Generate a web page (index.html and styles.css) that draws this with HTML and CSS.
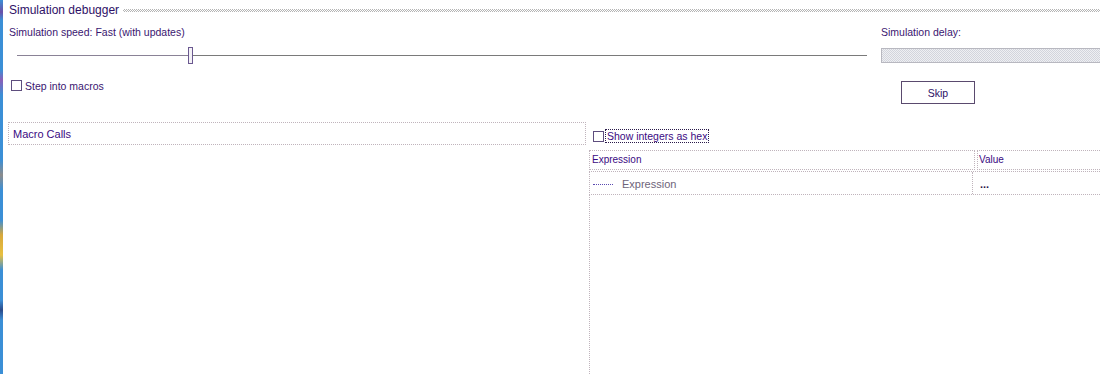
FILE: index.html
```html
<!DOCTYPE html>
<html>
<head>
<meta charset="utf-8">
<link rel="stylesheet" href="styles.css">
</head>
<body>
<div class="app">
  <div class="edge"></div>
  <div class="main">
    <div class="title-row">
      <span class="title">Simulation debugger</span>
      <span class="title-rule"></span>
    </div>
    <div class="top">
      <div class="speed">
        <div class="label">Simulation speed: Fast (with updates)</div>
        <div class="slider">
          <span class="track-left"></span>
          <span class="thumb"></span>
          <span class="track-right"></span>
        </div>
      </div>
      <div class="delay">
        <div class="label">Simulation delay:</div>
        <div class="delay-box"></div>
      </div>
    </div>
    <div class="row2">
      <div class="step">
        <span class="check"></span>
        <span class="label">Step into macros</span>
      </div>
      <div class="skip-wrap">
        <button class="skip">Skip</button>
      </div>
    </div>
    <div class="bottom">
      <div class="macro">Macro Calls</div>
      <div class="watch">
        <div class="hex-row">
          <span class="check"></span>
          <span class="label focus">Show integers as hex</span>
        </div>
        <div class="head">
          <div class="th th-expr">Expression</div>
          <div class="th th-val">Value</div>
        </div>
        <div class="row">
          <div class="td td-expr"><span class="dots"></span><span class="placeholder">Expression</span></div>
          <div class="td td-val">...</div>
        </div>
        <div class="rest"></div>
      </div>
    </div>
  </div>
</div>
</body>
</html>
```

FILE: styles.css
```css
* { box-sizing: border-box; }
html, body {
  margin: 0;
  padding: 0;
  width: 1100px;
  height: 374px;
  overflow: hidden;
  background: #fff;
  font-family: "Liberation Sans", Arial, sans-serif;
  color: #3a1670;
}
.app {
  display: flex;
  height: 374px;
}
.edge {
  width: 3px;
  flex: none;
  background: linear-gradient(to bottom,
    #3b8fd6 0, #6a4fa8 12px, #3b8fd6 20px, #3b8fd6 70px, #8a5fb8 80px,
    #3b8fd6 95px, #3b8fd6 160px, #8c8c8c 175px, #3b8fd6 190px,
    #3b8fd6 220px, #d8a83a 235px, #e8c040 255px, #3b8fd6 270px,
    #3b8fd6 300px, #2a4a8a 310px, #3b8fd6 320px, #3b8fd6 374px);
}
.main {
  flex: 1;
  display: flex;
  flex-direction: column;
  min-width: 0;
}
.title-row {
  display: flex;
  align-items: center;
  height: 20px;
  padding-left: 6px;
}
.title {
  font-size: 12px;
  line-height: 20px;
  color: #2e1066;
  white-space: nowrap;
}
.title-rule {
  flex: 1;
  height: 3px;
  margin-left: 4px;
  background: repeating-conic-gradient(#b4b4b4 0 25%, #ffffff 0 50%) 0 0 / 2px 2px;
}
.label {
  font-size: 10.5px;
  line-height: 14px;
  white-space: nowrap;
}
.top {
  display: flex;
  margin-top: 5px;
}
.speed {
  width: 858px;
  margin-left: 6px;
  flex: none;
}
.slider {
  display: flex;
  align-items: center;
  width: 850px;
  height: 17px;
  margin-left: 8px;
  margin-top: 8px;
}
.track-left {
  width: 171px;
  height: 1px;
  background: #8a8296;
}
.thumb {
  width: 5px;
  height: 17px;
  border: 1px solid #6a5890;
  background: #f4f2f6;
  flex: none;
}
.track-right {
  flex: 1;
  height: 1px;
  background: #7a7a7a;
}
.delay {
  flex: 1;
  margin-left: 14px;
  min-width: 0;
}
.delay-box {
  margin-top: 9px;
  height: 15px;
  margin-right: -10px;
  border: 1px solid #b8b8c0;
  background: repeating-conic-gradient(#d2d4dc 0 25%, #eeeff2 0 50%) 0 0 / 2px 2px;
}
.row2 {
  display: flex;
}
.step {
  width: 858px;
  margin-left: 6px;
  padding-left: 2px;
  margin-top: 16px;
  height: 11px;
  display: flex;
  align-items: center;
  flex: none;
}
.check {
  width: 11px;
  height: 11px;
  border: 1px solid #5e4e7e;
  background: #fff;
  flex: none;
}
.step .label {
  margin-left: 3px;
}
.skip-wrap {
  margin-left: 34px;
}
.skip {
  display: block;
  margin-top: 17px;
  width: 74px;
  height: 23px;
  border: 1px solid #5a4a6e;
  border-radius: 0;
  background: #fff;
  padding: 0;
  font-family: "Liberation Sans", Arial, sans-serif;
  font-size: 10.5px;
  color: #2e1066;
}
.bottom {
  display: flex;
  flex: 1;
  margin-top: 18px;
  min-height: 0;
}
.macro {
  margin-left: 5px;
  width: 578px;
  height: 23px;
  flex: none;
  border: 1px dotted #c0b4bc;
  padding-left: 4px;
  font-size: 11px;
  line-height: 23px;
  color: #3a0a82;
}
.watch {
  flex: 1;
  margin-left: 3px;
  display: flex;
  flex-direction: column;
  min-width: 0;
}
.hex-row {
  display: flex;
  align-items: center;
  height: 14px;
  margin-top: 7px;
  padding-left: 4px;
}
.focus {
  margin-left: 1px;
  padding: 0 1px;
  height: 14px;
  line-height: 12px;
  border: 1px dotted #2a1a4a;
  color: #3a0a82;
}
.head {
  display: flex;
  height: 20px;
  margin-top: 7px;
}
.th {
  border: 1px dotted #c0b4bc;
  font-size: 10px;
  line-height: 18px;
  color: #3a0a82;
  white-space: nowrap;
}
.th-expr {
  width: 386px;
  padding-left: 2px;
}
.th-val {
  flex: 1;
  margin-left: 2px;
  margin-right: -10px;
  padding-left: 1px;
}
.row {
  display: flex;
  height: 24px;
  margin-top: 1px;
  margin-right: -10px;
  border: 1px dotted #c0b4bc;
}
.td {
  display: flex;
  align-items: center;
  padding-top: 2px;
}
.td-expr {
  width: 383px;
  border-right: 1px dotted #c0b4bc;
  padding-left: 3px;
}
.dots {
  width: 20px;
  border-top: 1px dotted #5a4ab0;
  flex: none;
}
.placeholder {
  margin-left: 9px;
  font-size: 11px;
  color: #6e647a;
}
.td-val {
  flex: 1;
  padding-left: 7px;
  font-size: 11px;
  font-weight: bold;
  color: #2a1a4a;
}
.rest {
  flex: 1;
  border-left: 1px dotted #c0b4bc;
}
```
